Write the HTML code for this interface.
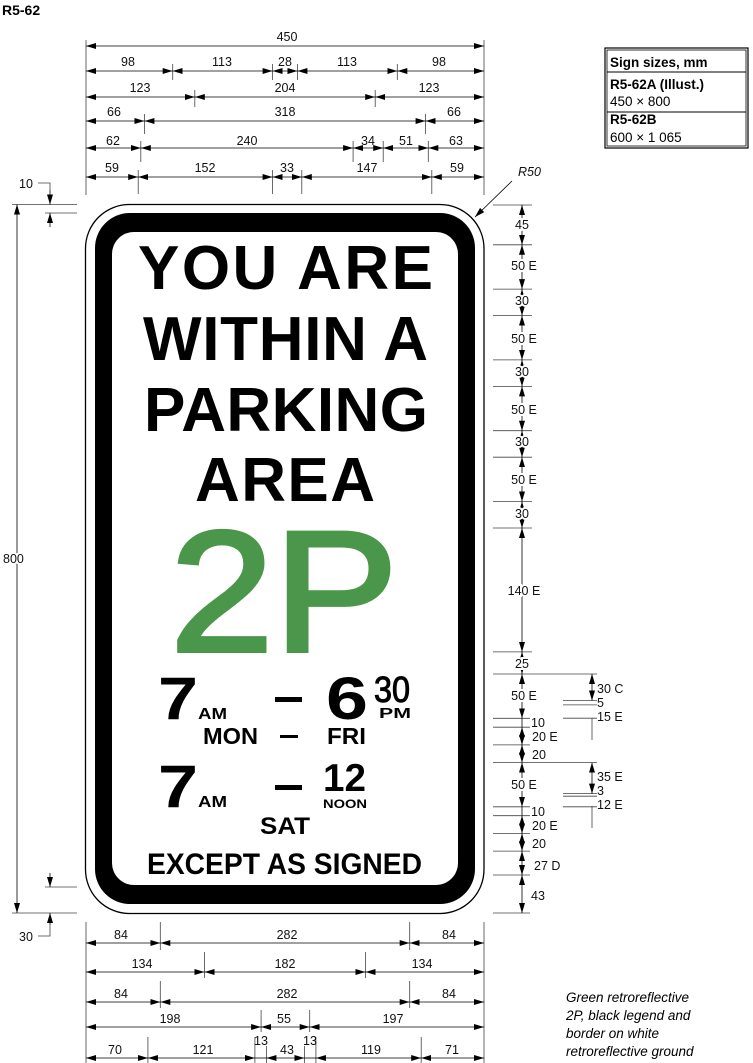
<!DOCTYPE html>
<html><head><meta charset="utf-8"><style>
html,body{margin:0;padding:0;background:#fff;}
svg{display:block;}
text{font-family:"Liberation Sans",sans-serif;}
.d{font-size:12.5px;fill:#111;}
.b{stroke:#fff;stroke-width:4px;paint-order:stroke;}
.s{font-weight:bold;fill:#000;}
</style></head><body>
<svg width="753" height="1063" viewBox="0 0 753 1063" xmlns="http://www.w3.org/2000/svg">
<defs>
<marker id="a" viewBox="0 0 10 7" refX="10" refY="3.5" markerWidth="10" markerHeight="7" markerUnits="userSpaceOnUse" orient="auto-start-reverse"><path d="M0,0.5 L10,3.5 L0,6.5 z" fill="#000"/></marker>
</defs>
<text x="2" y="15" style="font-size:14px;font-weight:bold">R5-62</text>

<rect x="605" y="48" width="143" height="100" fill="none" stroke="#000" stroke-width="1.2"/>
<rect x="607" y="50" width="139" height="96" fill="none" stroke="#000" stroke-width="0.8"/>
<line x1="607" y1="72" x2="746" y2="72" stroke="#000" stroke-width="1"/>
<line x1="607" y1="112" x2="746" y2="112" stroke="#000" stroke-width="1"/>
<g style="font-size:13.5px">
<text x="610" y="67" font-weight="bold">Sign sizes, mm</text>
<text x="610" y="89" font-weight="bold">R5-62A (Illust.)</text>
<text x="610" y="106">450 × 800</text>
<text x="610" y="124" font-weight="bold">R5-62B</text>
<text x="610" y="142">600 × 1 065</text>
</g>

<g stroke="#444" stroke-width="0.8" fill="none">
<line x1="86" y1="40" x2="86" y2="195"/><line x1="484" y1="40" x2="484" y2="195"/>
<line x1="172.7" y1="64" x2="172.7" y2="80"/><line x1="272.6" y1="64" x2="272.6" y2="80"/><line x1="297.4" y1="64" x2="297.4" y2="80"/><line x1="397.3" y1="64" x2="397.3" y2="80"/>
<line x1="194.8" y1="90" x2="194.8" y2="107"/><line x1="375.2" y1="90" x2="375.2" y2="107"/>
<line x1="144.4" y1="114" x2="144.4" y2="134"/><line x1="425.6" y1="114" x2="425.6" y2="134"/>
<line x1="140.8" y1="141" x2="140.8" y2="162"/><line x1="353.1" y1="141" x2="353.1" y2="162"/><line x1="383.2" y1="141" x2="383.2" y2="162"/><line x1="428.3" y1="141" x2="428.3" y2="162"/>
<line x1="138.2" y1="170" x2="138.2" y2="194"/><line x1="272.6" y1="170" x2="272.6" y2="194"/><line x1="301.8" y1="170" x2="301.8" y2="194"/><line x1="431.8" y1="170" x2="431.8" y2="194"/>
</g>
<g stroke="#000" stroke-width="0.8" marker-start="url(#a)" marker-end="url(#a)">
<line x1="86" y1="46" x2="484" y2="46"/>
<line x1="86" y1="71" x2="172.7" y2="71"/><line x1="172.7" y1="71" x2="272.6" y2="71"/><line x1="272.6" y1="71" x2="297.4" y2="71"/><line x1="297.4" y1="71" x2="397.3" y2="71"/><line x1="397.3" y1="71" x2="484" y2="71"/>
<line x1="86" y1="97" x2="194.8" y2="97"/><line x1="194.8" y1="97" x2="375.2" y2="97"/><line x1="375.2" y1="97" x2="484" y2="97"/>
<line x1="86" y1="121" x2="144.4" y2="121"/><line x1="144.4" y1="121" x2="425.6" y2="121"/><line x1="425.6" y1="121" x2="484" y2="121"/>
<line x1="86" y1="148" x2="140.8" y2="148"/><line x1="140.8" y1="148" x2="353.1" y2="148"/><line x1="353.1" y1="148" x2="383.2" y2="148"/><line x1="383.2" y1="148" x2="428.3" y2="148"/><line x1="428.3" y1="148" x2="484" y2="148"/>
<line x1="86" y1="177" x2="138.2" y2="177"/><line x1="138.2" y1="177" x2="272.6" y2="177"/><line x1="272.6" y1="177" x2="301.8" y2="177"/><line x1="301.8" y1="177" x2="431.8" y2="177"/><line x1="431.8" y1="177" x2="484" y2="177"/>
</g>
<g class="d" text-anchor="middle">
<text x="287" y="41">450</text>
<text x="128" y="66">98</text><text x="222" y="66">113</text><text x="285" y="66">28</text><text x="347" y="66">113</text><text x="439" y="66">98</text>
<text x="140" y="92">123</text><text x="285" y="92">204</text><text x="429" y="92">123</text>
<text x="114" y="116">66</text><text x="285" y="116">318</text><text x="454" y="116">66</text>
<text x="113" y="145">62</text><text x="247" y="145">240</text><text x="368" y="145">34</text><text x="406" y="145">51</text><text x="456" y="145">63</text>
<text x="112" y="172">59</text><text x="205" y="172">152</text><text x="287" y="172">33</text><text x="367" y="172">147</text><text x="457" y="172">59</text>
</g>

<g stroke="#444" stroke-width="0.8" fill="none">
<line x1="12" y1="204.5" x2="77" y2="204.5"/><line x1="45" y1="213" x2="77" y2="213"/>
<line x1="12" y1="913" x2="77" y2="913"/><line x1="45" y1="887" x2="77" y2="887"/>
<polyline points="38,183 50,183 50,190"/>
<polyline points="38,936 50,936 50,925"/>
</g>
<g stroke="#000" stroke-width="0.8" marker-end="url(#a)">
<line x1="50" y1="190" x2="50" y2="204.5"/><line x1="50" y1="227" x2="50" y2="213"/>
<line x1="50" y1="873" x2="50" y2="887"/><line x1="50" y1="925" x2="50" y2="913"/>
</g>
<line x1="17" y1="204.5" x2="17" y2="913" stroke="#000" stroke-width="0.8" marker-start="url(#a)" marker-end="url(#a)"/>
<text class="d b" x="3" y="563">800</text>
<text class="d" x="19" y="188">10</text>
<text class="d" x="19" y="941">30</text>

<text class="d" x="518" y="176" font-style="italic">R50</text>
<line x1="512" y1="181" x2="475" y2="217" stroke="#000" stroke-width="0.8" marker-end="url(#a)"/>

<rect x="85.5" y="204.5" width="398.5" height="709" rx="44" fill="#fff" stroke="#000" stroke-width="1.3"/>
<rect x="95" y="213" width="380" height="691" rx="35" fill="#000"/>
<rect x="112" y="232" width="346" height="653" rx="22" fill="#fff"/>

<g class="s">
<text x="138" y="289" font-size="62" textLength="295" lengthAdjust="spacing">YOU ARE</text>
<text x="143" y="360" font-size="62" textLength="285" lengthAdjust="spacing">WITHIN A</text>
<text x="144" y="431" font-size="62" textLength="284" lengthAdjust="spacing">PARKING</text>
<text x="195" y="501" font-size="62" textLength="180" lengthAdjust="spacing">AREA</text>
<text x="170" y="651" font-size="172" textLength="228" lengthAdjust="spacingAndGlyphs" style="fill:#4a964a;font-weight:normal;stroke:#4a964a;stroke-width:4">2P</text>
<text x="158" y="719" font-size="60" textLength="40" lengthAdjust="spacingAndGlyphs">7</text>
<text x="198" y="719" font-size="16" textLength="29" lengthAdjust="spacingAndGlyphs">AM</text>
<rect x="275" y="697" width="27" height="5" fill="#000"/>
<text x="326" y="719" font-size="60" textLength="42" lengthAdjust="spacingAndGlyphs">6</text>
<text x="374" y="702" font-size="36" textLength="36" lengthAdjust="spacingAndGlyphs" style="font-weight:normal;stroke:#000;stroke-width:1">30</text>
<text x="379" y="718" font-size="15" textLength="32" lengthAdjust="spacingAndGlyphs">PM</text>
<text x="203" y="744" font-size="23" textLength="55" lengthAdjust="spacingAndGlyphs">MON</text>
<rect x="280" y="735" width="18" height="3" fill="#000"/>
<text x="327" y="744" font-size="23" textLength="39" lengthAdjust="spacingAndGlyphs">FRI</text>
<text x="158" y="807" font-size="60" textLength="40" lengthAdjust="spacingAndGlyphs">7</text>
<text x="198" y="807" font-size="16" textLength="29" lengthAdjust="spacingAndGlyphs">AM</text>
<rect x="275" y="785" width="27" height="5" fill="#000"/>
<text x="323" y="791" font-size="39" textLength="43" lengthAdjust="spacingAndGlyphs">12</text>
<text x="323" y="808" font-size="11.5" textLength="44" lengthAdjust="spacingAndGlyphs">NOON</text>
<text x="260" y="834" font-size="24" textLength="50" lengthAdjust="spacingAndGlyphs">SAT</text>
<text x="147" y="874" font-size="30" textLength="275" lengthAdjust="spacingAndGlyphs">EXCEPT AS SIGNED</text>
</g>

<g stroke="#444" stroke-width="0.8">
<line x1="493" y1="205" x2="532" y2="205"/><line x1="493" y1="244.8" x2="532" y2="244.8"/><line x1="493" y1="289.1" x2="532" y2="289.1"/><line x1="493" y1="315.6" x2="532" y2="315.6"/><line x1="493" y1="359.9" x2="532" y2="359.9"/><line x1="493" y1="386.4" x2="532" y2="386.4"/><line x1="493" y1="430.7" x2="532" y2="430.7"/><line x1="493" y1="457.2" x2="532" y2="457.2"/><line x1="493" y1="501.5" x2="532" y2="501.5"/><line x1="493" y1="528" x2="532" y2="528"/><line x1="493" y1="651.9" x2="532" y2="651.9"/>
<line x1="493" y1="674" x2="597" y2="674"/><line x1="493" y1="718.3" x2="530" y2="718.3"/><line x1="493" y1="727.2" x2="530" y2="727.2"/><line x1="493" y1="744.9" x2="530" y2="744.9"/>
<line x1="493" y1="762.6" x2="597" y2="762.6"/><line x1="493" y1="806.8" x2="530" y2="806.8"/><line x1="493" y1="815.7" x2="530" y2="815.7"/><line x1="493" y1="833.4" x2="530" y2="833.4"/><line x1="493" y1="851.1" x2="530" y2="851.1"/><line x1="493" y1="875" x2="530" y2="875"/><line x1="493" y1="913" x2="530" y2="913"/>
<line x1="563" y1="700.5" x2="597" y2="700.5"/><line x1="563" y1="704.9" x2="597" y2="704.9"/><line x1="563" y1="718.2" x2="597" y2="718.2"/>
<line x1="563" y1="793.6" x2="597" y2="793.6"/><line x1="563" y1="796.2" x2="597" y2="796.2"/><line x1="563" y1="806.8" x2="597" y2="806.8"/>
<line x1="592" y1="718" x2="592" y2="740"/><line x1="592" y1="806" x2="592" y2="828"/>
</g>
<g stroke="#000" stroke-width="0.8" marker-start="url(#a)" marker-end="url(#a)">
<line x1="522" y1="205" x2="522" y2="244.8"/><line x1="522" y1="244.8" x2="522" y2="289.1"/><line x1="522" y1="289.1" x2="522" y2="315.6"/><line x1="522" y1="315.6" x2="522" y2="359.9"/><line x1="522" y1="359.9" x2="522" y2="386.4"/><line x1="522" y1="386.4" x2="522" y2="430.7"/><line x1="522" y1="430.7" x2="522" y2="457.2"/><line x1="522" y1="457.2" x2="522" y2="501.5"/><line x1="522" y1="501.5" x2="522" y2="528"/><line x1="522" y1="528" x2="522" y2="651.9"/><line x1="522" y1="651.9" x2="522" y2="674"/><line x1="522" y1="674" x2="522" y2="718.3"/><line x1="522" y1="727.2" x2="522" y2="744.9"/><line x1="522" y1="744.9" x2="522" y2="762.6"/><line x1="522" y1="762.6" x2="522" y2="806.8"/><line x1="522" y1="815.7" x2="522" y2="833.4"/><line x1="522" y1="833.4" x2="522" y2="851.1"/><line x1="522" y1="851.1" x2="522" y2="875"/><line x1="522" y1="875" x2="522" y2="913"/>
<line x1="592" y1="674" x2="592" y2="700.5"/><line x1="592" y1="762.6" x2="592" y2="793.6"/>
</g>
<line x1="522" y1="718.3" x2="522" y2="727.2" stroke="#000" stroke-width="0.8"/>
<line x1="522" y1="806.8" x2="522" y2="815.7" stroke="#000" stroke-width="0.8"/>
<g class="d">
<g class="b" text-anchor="middle">
<text x="522" y="229">45</text><text x="524" y="270">50 E</text><text x="522" y="305">30</text><text x="524" y="343">50 E</text><text x="522" y="376">30</text><text x="524" y="414">50 E</text><text x="522" y="446">30</text><text x="524" y="484">50 E</text><text x="522" y="518">30</text><text x="524" y="595">140 E</text><text x="522" y="668">25</text><text x="524" y="700">50 E</text><text x="524" y="789">50 E</text>
</g>
<text x="531" y="727">10</text><text x="532" y="741">20 E</text><text x="532" y="759">20</text>
<text x="531" y="816">10</text><text x="532" y="830">20 E</text><text x="532" y="848">20</text><text x="534" y="870">27 D</text><text x="531" y="900">43</text>
<text x="597" y="693">30 C</text><text x="597" y="707">5</text><text x="597" y="721">15 E</text>
<text x="597" y="781">35 E</text><text x="597" y="795">3</text><text x="597" y="809">12 E</text>
</g>

<g stroke="#444" stroke-width="0.8">
<line x1="86" y1="922" x2="86" y2="1063"/><line x1="484" y1="922" x2="484" y2="1063"/>
<line x1="160.3" y1="922" x2="160.3" y2="950"/><line x1="409.7" y1="922" x2="409.7" y2="950"/>
<line x1="204.5" y1="952" x2="204.5" y2="978"/><line x1="365.5" y1="952" x2="365.5" y2="978"/>
<line x1="160.3" y1="981" x2="160.3" y2="1008"/><line x1="409.7" y1="981" x2="409.7" y2="1008"/>
<line x1="261.1" y1="1010" x2="261.1" y2="1032"/><line x1="309.7" y1="1010" x2="309.7" y2="1032"/>
<line x1="147.9" y1="1037" x2="147.9" y2="1063"/><line x1="254.9" y1="1037" x2="254.9" y2="1063"/><line x1="266.4" y1="1046" x2="266.4" y2="1063"/><line x1="304.4" y1="1046" x2="304.4" y2="1063"/><line x1="315.9" y1="1037" x2="315.9" y2="1063"/><line x1="421.2" y1="1037" x2="421.2" y2="1063"/>
</g>
<g stroke="#000" stroke-width="0.8" marker-start="url(#a)" marker-end="url(#a)">
<line x1="86" y1="943" x2="160.3" y2="943"/><line x1="160.3" y1="943" x2="409.7" y2="943"/><line x1="409.7" y1="943" x2="484" y2="943"/>
<line x1="86" y1="972" x2="204.5" y2="972"/><line x1="204.5" y1="972" x2="365.5" y2="972"/><line x1="365.5" y1="972" x2="484" y2="972"/>
<line x1="86" y1="1002" x2="160.3" y2="1002"/><line x1="160.3" y1="1002" x2="409.7" y2="1002"/><line x1="409.7" y1="1002" x2="484" y2="1002"/>
<line x1="86" y1="1027" x2="261.1" y2="1027"/><line x1="261.1" y1="1027" x2="309.7" y2="1027"/><line x1="309.7" y1="1027" x2="484" y2="1027"/>
<line x1="86" y1="1058" x2="147.9" y2="1058"/><line x1="147.9" y1="1058" x2="254.9" y2="1058"/><line x1="266.4" y1="1058" x2="304.4" y2="1058"/><line x1="315.9" y1="1058" x2="421.2" y2="1058"/><line x1="421.2" y1="1058" x2="484" y2="1058"/>
</g>
<line x1="254.9" y1="1058" x2="266.4" y2="1058" stroke="#000" stroke-width="0.8"/>
<line x1="304.4" y1="1058" x2="315.9" y2="1058" stroke="#000" stroke-width="0.8"/>
<g class="d" text-anchor="middle">
<text x="121" y="939">84</text><text x="287" y="939">282</text><text x="449" y="939">84</text>
<text x="142" y="968">134</text><text x="285" y="968">182</text><text x="422" y="968">134</text>
<text x="121" y="998">84</text><text x="287" y="998">282</text><text x="449" y="998">84</text>
<text x="170" y="1023">198</text><text x="284" y="1023">55</text><text x="393" y="1023">197</text>
<text x="115" y="1054">70</text><text x="203" y="1054">121</text><text x="261" y="1045">13</text><text x="287" y="1054">43</text><text x="310" y="1045">13</text><text x="371" y="1054">119</text><text x="452" y="1054">71</text>
</g>

<g style="font-size:13.5px;font-style:italic">
<text x="566" y="1002">Green retroreflective</text>
<text x="566" y="1020">2P, black legend and</text>
<text x="566" y="1038">border on white</text>
<text x="566" y="1056">retroreflective ground</text>
</g>
</svg>
</body></html>
